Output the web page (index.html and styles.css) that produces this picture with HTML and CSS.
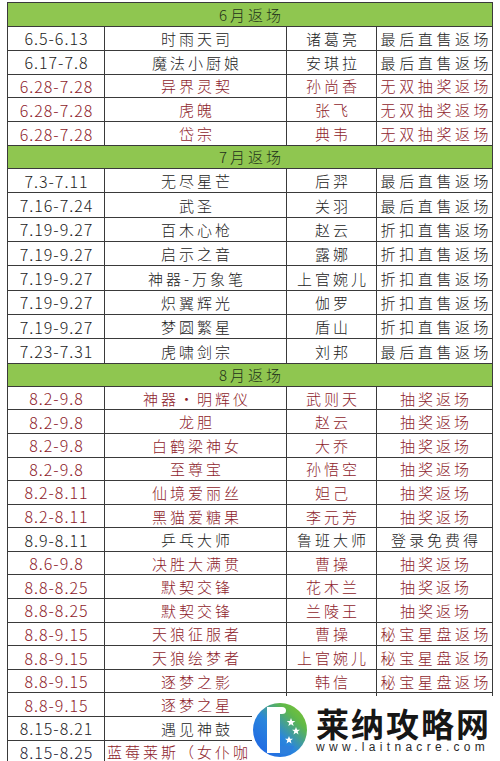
FILE: index.html
```html
<!DOCTYPE html>
<html lang="zh-CN">
<head>
<meta charset="utf-8">
<title>返场时间表</title>
<link rel="stylesheet" href="styles.css">
</head>
<body>
<div class="sheet">
  <div class="month first">6月返场</div>
  <div class="section s6">
    <div class="row"><span class="date">6.5-6.13</span><span>时雨天司</span><span>诸葛亮</span><span class="wide">最后直售返场</span></div>
    <div class="row"><span class="date">6.17-7.8</span><span>魔法小厨娘</span><span>安琪拉</span><span class="wide">最后直售返场</span></div>
    <div class="row red"><span class="date">6.28-7.28</span><span>异界灵契</span><span>孙尚香</span><span class="wide">无双抽奖返场</span></div>
    <div class="row red"><span class="date">6.28-7.28</span><span>虎魄</span><span>张飞</span><span class="wide">无双抽奖返场</span></div>
    <div class="row red"><span class="date">6.28-7.28</span><span>岱宗</span><span>典韦</span><span class="wide">无双抽奖返场</span></div>
  </div>
  <div class="month">7月返场</div>
  <div class="section s7">
    <div class="row"><span class="date">7.3-7.11</span><span>无尽星芒</span><span>后羿</span><span class="wide">最后直售返场</span></div>
    <div class="row"><span class="date">7.16-7.24</span><span>武圣</span><span>关羽</span><span class="wide">最后直售返场</span></div>
    <div class="row"><span class="date">7.19-9.27</span><span>百木心枪</span><span>赵云</span><span class="wide">折扣直售返场</span></div>
    <div class="row"><span class="date">7.19-9.27</span><span>启示之音</span><span>露娜</span><span class="wide">折扣直售返场</span></div>
    <div class="row"><span class="date">7.19-9.27</span><span>神器-万象笔</span><span>上官婉儿</span><span class="wide">折扣直售返场</span></div>
    <div class="row"><span class="date">7.19-9.27</span><span>炽翼辉光</span><span>伽罗</span><span class="wide">折扣直售返场</span></div>
    <div class="row"><span class="date">7.19-9.27</span><span>梦圆繁星</span><span>盾山</span><span class="wide">折扣直售返场</span></div>
    <div class="row"><span class="date">7.23-7.31</span><span>虎啸剑宗</span><span>刘邦</span><span class="wide">最后直售返场</span></div>
  </div>
  <div class="month">8月返场</div>
  <div class="section s8">
    <div class="row red"><span class="date">8.2-9.8</span><span>神器·明辉仪</span><span>武则天</span><span>抽奖返场</span></div>
    <div class="row red"><span class="date">8.2-9.8</span><span>龙胆</span><span>赵云</span><span>抽奖返场</span></div>
    <div class="row red"><span class="date">8.2-9.8</span><span>白鹤梁神女</span><span>大乔</span><span>抽奖返场</span></div>
    <div class="row red"><span class="date">8.2-9.8</span><span>至尊宝</span><span>孙悟空</span><span>抽奖返场</span></div>
    <div class="row red"><span class="date">8.2-8.11</span><span>仙境爱丽丝</span><span>妲己</span><span>抽奖返场</span></div>
    <div class="row red"><span class="date">8.2-8.11</span><span>黑猫爱糖果</span><span>李元芳</span><span>抽奖返场</span></div>
    <div class="row"><span class="date">8.9-8.11</span><span>乒乓大师</span><span>鲁班大师</span><span>登录免费得</span></div>
    <div class="row red"><span class="date">8.6-9.8</span><span>决胜大满贯</span><span>曹操</span><span>抽奖返场</span></div>
    <div class="row red"><span class="date">8.8-8.25</span><span>默契交锋</span><span>花木兰</span><span>抽奖返场</span></div>
    <div class="row red"><span class="date">8.8-8.25</span><span>默契交锋</span><span>兰陵王</span><span>抽奖返场</span></div>
    <div class="row red"><span class="date">8.8-9.15</span><span>天狼征服者</span><span>曹操</span><span class="wide">秘宝星盘返场</span></div>
    <div class="row red"><span class="date">8.8-9.15</span><span>天狼绘梦者</span><span>上官婉儿</span><span class="wide">秘宝星盘返场</span></div>
    <div class="row red"><span class="date">8.8-9.15</span><span>逐梦之影</span><span>韩信</span><span class="wide">秘宝星盘返场</span></div>
    <div class="row red"><span class="date">8.8-9.15</span><span>逐梦之星</span><span></span><span></span></div>
    <div class="row"><span class="date">8.15-8.21</span><span>遇见神鼓</span><span></span><span></span></div>
    <div class="row red"><span class="date ink">8.15-8.25</span><span class="spill">蓝莓莱斯（女仆咖</span><span></span><span></span></div>
  </div>
</div>

<div class="brand">
  <svg class="brand-mark" viewBox="0 0 56 56" width="56" height="56" aria-hidden="true">
    <defs>
      <linearGradient id="lg" x1="0" y1="1" x2="1" y2="0">
        <stop offset="0" stop-color="#1d5fe6"/>
        <stop offset="0.45" stop-color="#2a86dc"/>
        <stop offset="0.75" stop-color="#5fb84a"/>
        <stop offset="1" stop-color="#86c92c"/>
      </linearGradient>
    </defs>
    <circle cx="28" cy="28" r="27" fill="url(#lg)"/>
    <path d="M15 5 H30 Q34 5 34 8.5 Q34 12 30 12 H28 V51 H15 Z" fill="#fff"/>
    <path d="M28 44 H42 Q40 49 34 52 H28 Z" fill="#2d7fdc"/>
    <polygon points="39,16 40.2,19 43.3,19 40.8,20.9 41.7,24 39,22.2 36.3,24 37.2,20.9 34.7,19 37.8,19" fill="#fff"/>
    <polygon points="44,25 45.1,27.8 48,27.8 45.7,29.6 46.5,32.5 44,30.8 41.5,32.5 42.3,29.6 40,27.8 42.9,27.8" fill="#fff"/>
    <polygon points="37,34 38.1,36.8 41,36.8 38.7,38.6 39.5,41.5 37,39.8 34.5,41.5 35.3,38.6 33,36.8 35.9,36.8" fill="#fff"/>
  </svg>
  <div class="brand-text">
    <div class="brand-name">莱纳攻略网</div>
    <div class="brand-url">www.laitnacre.com</div>
  </div>
</div>
</body>
</html>
```

FILE: styles.css
```css
html, body {
  margin: 0;
  padding: 0;
  background: #fff;
}

body {
  position: relative;
  width: 500px;
  height: 761px;
  overflow: hidden;
  font-family: "Noto Sans CJK SC", "Noto Sans", sans-serif;
  color: #222;
}

.sheet {
  box-sizing: border-box;
  width: 486px;
  margin: 2px 0 0 7px;
  border: 1px solid #3a3a3a;
  border-bottom: none;
}

.month {
  box-sizing: border-box;
  height: 23px;
  background: #8fc650;
  border-bottom: 1px solid #3a3a3a;
  display: flex;
  align-items: center;
  justify-content: center;
  font-size: 15px;
  font-weight: 300;
  letter-spacing: 3px;
  text-indent: 3px;
  color: #23311a;
  line-height: 1;
}

.month.first {
  height: 24px;
}

.section {
  --row-h: 23.8px;
}

.s7 {
  --row-h: 24.35px;
}

.s8 {
  --row-h: 23.6px;
}

.row {
  box-sizing: border-box;
  height: var(--row-h);
  display: grid;
  grid-template-columns: 97px 182px 90px 1fr;
  border-bottom: 1px solid #3a3a3a;
  font-size: 15px;
  font-weight: 300;
  line-height: 1;
}

.row > span {
  display: flex;
  align-items: center;
  justify-content: center;
  border-right: 1px solid #3a3a3a;
  letter-spacing: 3px;
  text-indent: 3px;
  white-space: nowrap;
}

.row > span:last-child {
  border-right: none;
}

.row > .date {
  font-size: 16px;
  letter-spacing: 1px;
  text-indent: 1px;
}

.row > .wide {
  letter-spacing: 3.6px;
  text-indent: 3.6px;
}

.red {
  color: #8e1c2b;
}

.red > .ink {
  color: #1d2233;
}

.row > .spill {
  justify-content: flex-start;
  overflow: hidden;
  text-indent: 0;
  letter-spacing: 3px;
  padding-left: 2px;
}

.brand {
  position: absolute;
  left: 252px;
  top: 696px;
  width: 248px;
  height: 65px;
  background: #fff;
  display: flex;
  align-items: flex-start;
  gap: 8px;
  padding-top: 6px;
  box-sizing: border-box;
}

.brand-mark {
  flex: none;
  display: block;
}

.brand-text {
  display: flex;
  flex-direction: column;
  align-items: flex-start;
  padding-top: 3px;
}

.brand-name {
  font-family: "Noto Sans CJK SC", sans-serif;
  font-weight: 700;
  font-size: 33px;
  line-height: 36px;
  letter-spacing: 2px;
  color: #161616;
}

.brand-url {
  font-family: "Liberation Sans", Arial, sans-serif;
  font-size: 12px;
  line-height: 12px;
  letter-spacing: 4.3px;
  color: #2a2a2a;
}
```
